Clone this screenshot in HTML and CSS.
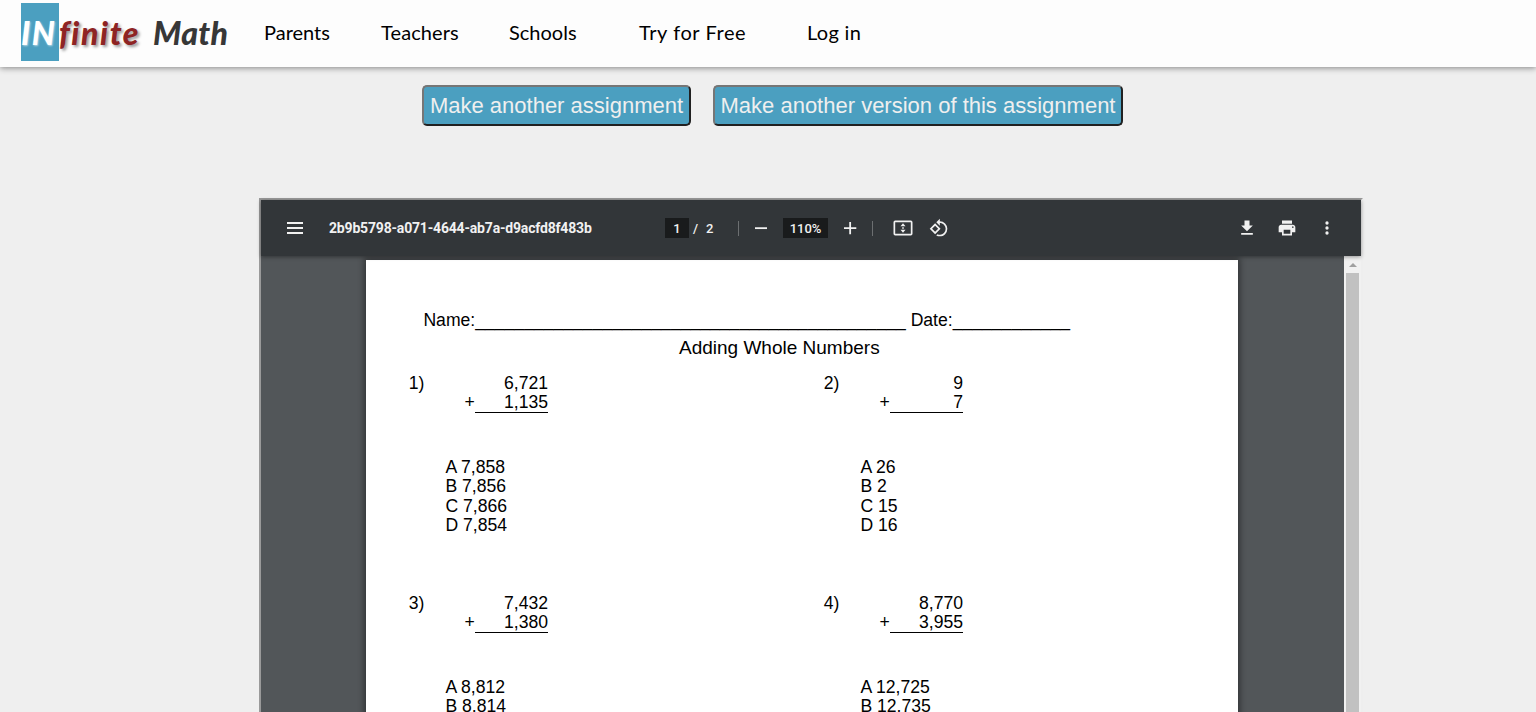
FILE: index.html
```html
<!DOCTYPE html>
<html lang="en">
<head>
<meta charset="utf-8">
<title>INfinite Math</title>
<link rel="stylesheet" href="styles.css">
</head>
<body>
<header class="site-header">
  <a class="logo"><span class="logo-in">IN</span><span class="logo-finite">finite</span><span class="logo-math">Math</span></a>
  <nav class="nav">
    <a class="nav-parents">Parents</a>
    <a class="nav-teachers">Teachers</a>
    <a class="nav-schools">Schools</a>
    <a class="nav-try">Try for Free</a>
    <a class="nav-login">Log in</a>
  </nav>
</header>
<main>
  <div class="actions">
    <button class="action">Make another assignment</button>
    <button class="action action-wide">Make another version of this assignment</button>
  </div>
  <section class="viewer">
    <div class="toolbar">
      <svg class="icon menu" viewBox="0 0 24 24"><path d="M4 6h16v2H4zM4 11h16v2H4zM4 16h16v2H4z"/></svg>
      <span class="filename">2b9b5798-a071-4644-ab7a-d9acfd8f483b</span>
      <span class="field page-field">1</span>
      <span class="slash">/</span>
      <span class="page-total">2</span>
      <i class="divider"></i>
      <svg class="icon small minus" viewBox="0 0 24 24"><path d="M4 11h16v2.4H4z"/></svg>
      <span class="field zoom-field">110%</span>
      <svg class="icon small plus" viewBox="0 0 24 24"><path d="M4 11h7V4h2.4v7h7v2.4h-7v7H11v-7H4z"/></svg>
      <i class="divider second"></i>
      <svg class="icon fit" viewBox="0 0 20 16"><path fill-rule="evenodd" d="M2.2.5h15.6a1.7 1.7 0 0 1 1.7 1.7v11.6a1.7 1.7 0 0 1-1.7 1.7H2.2a1.7 1.7 0 0 1-1.7-1.7V2.2A1.7 1.7 0 0 1 2.2.5zm0 1.7v11.6h15.6V2.2zM10 3.2l2.5 3h-5zM10 12.8l2.5-3h-5zM9.2 7.3h1.6v1.4H9.2z"/></svg>
      <svg class="icon rotate" viewBox="0 0 24 24"><path d="M7.34 6.41L.86 12.9l6.49 6.48 6.49-6.48-6.5-6.49zM3.69 12.9l3.66-3.66L11 12.9l-3.66 3.66-3.65-3.66zm15.67-6.26A8.95 8.95 0 0 0 13 4V.76L8.76 5 13 9.24V6c1.79 0 3.58.68 4.95 2.05a7.007 7.007 0 0 1 0 9.9 6.973 6.973 0 0 1-7.79 1.44l-1.49 1.49C10.02 21.62 11.51 22 13 22c2.3 0 4.61-.88 6.36-2.64a8.98 8.98 0 0 0 0-12.72z"/></svg>
      <svg class="icon download" viewBox="0 0 24 24"><path d="M19 9h-4V3H9v6H5l7 7 7-7zM5 18v2h14v-2H5z"/></svg>
      <svg class="icon print" viewBox="0 0 24 24"><path d="M19 8H5c-1.66 0-3 1.34-3 3v6h4v4h12v-4h4v-6c0-1.66-1.34-3-3-3zm-3 11H8v-5h8v5zm3-7c-.55 0-1-.45-1-1s.45-1 1-1 1 .45 1 1-.45 1-1 1zm-1-9H6v4h12V3z"/></svg>
      <svg class="icon more" viewBox="0 0 24 24"><circle cx="12" cy="6" r="2"/><circle cx="12" cy="12" r="2"/><circle cx="12" cy="18" r="2"/></svg>
    </div>
    <div class="canvas">
      <article class="sheet">
        <div class="name-line">Name:____________________________________________ Date:____________</div>
        <h1 class="title">Adding Whole Numbers</h1>
        <div class="problems">
          <div class="problem">
            <span class="number">1)</span>
            <div class="sum"><div>6,721</div><div class="addend"><span class="sign">+</span><span class="rule">1,135</span></div></div>
            <div class="answers"><div>A 7,858</div><div>B 7,856</div><div>C 7,866</div><div>D 7,854</div></div>
          </div>
          <div class="problem">
            <span class="number">2)</span>
            <div class="sum"><div>9</div><div class="addend"><span class="sign">+</span><span class="rule">7</span></div></div>
            <div class="answers"><div>A 26</div><div>B 2</div><div>C 15</div><div>D 16</div></div>
          </div>
          <div class="problem">
            <span class="number">3)</span>
            <div class="sum"><div>7,432</div><div class="addend"><span class="sign">+</span><span class="rule">1,380</span></div></div>
            <div class="answers"><div>A 8,812</div><div>B 8,814</div></div>
          </div>
          <div class="problem">
            <span class="number">4)</span>
            <div class="sum"><div>8,770</div><div class="addend"><span class="sign">+</span><span class="rule">3,955</span></div></div>
            <div class="answers"><div>A 12,725</div><div>B 12,735</div></div>
          </div>
        </div>
      </article>
      <div class="scrollbar"><i class="arrow"></i><i class="thumb"></i></div>
    </div>
  </section>
</main>
</body>
</html>
```

FILE: styles.css
```css
* { box-sizing: border-box; }
html, body { height: 100%; }
body {
  margin: 0;
  background: #efefef;
  font-family: "Liberation Sans", Arial, sans-serif;
  overflow: hidden;
  display: flex;
  flex-direction: column;
}
.site-header {
  flex: none;
  height: 67px;
  padding-left: 21px;
  display: flex;
  background: #fdfdfd;
  box-shadow: 0 1px 6px rgba(0, 0, 0, .45);
}
.logo {
  display: flex;
  width: 243px;
  height: 58px;
  margin-top: 3px;
  font: italic 900 32px/59px Lato, sans-serif;
  white-space: nowrap;
}
.logo-in { width: 38px; background: #4b9fc0; color: #fff; letter-spacing: 1.5px; text-shadow: 1px 1px 2px rgba(255, 255, 255, .6); }
.logo-finite { width: 94px; color: #8e2424; letter-spacing: 1.6px; text-shadow: 2px 2px 3px rgba(0, 0, 0, .4); }
.logo-math { color: #373737; letter-spacing: .3px; }
.nav { display: flex; font: 20px/64px Lato, sans-serif; color: #000; white-space: nowrap; }
.nav-parents { width: 117px; }
.nav-teachers { width: 128px; letter-spacing: .1px; }
.nav-schools { width: 130px; }
.nav-try { width: 168px; letter-spacing: .58px; }
.nav-login { letter-spacing: .3px; }
main { flex: 1; min-height: 0; display: flex; flex-direction: column; }
.actions { display: flex; gap: 22px; padding: 18px 0 0 422px; height: 131px; }
.action {
  width: 269px;
  height: 41px;
  padding: 0;
  border: 2px solid;
  border-color: #767676 #212121 #212121 #767676;
  border-radius: 5px;
  background: #4b9fc0;
  color: #efefef;
  font: 22px "Liberation Sans", Arial, sans-serif;
  white-space: nowrap;
}
.action-wide { width: 410px; }
.viewer {
  flex: 1;
  min-height: 0;
  width: 1104px;
  margin-left: 259px;
  border: solid;
  border-width: 2px 2px 0;
  border-color: #9a9a9a #eee #eee #9a9a9a;
  display: flex;
  flex-direction: column;
}
.toolbar {
  flex: none;
  position: relative;
  z-index: 1;
  height: 56px;
  display: flex;
  align-items: center;
  background: #323639;
  color: #f1f1f1;
  box-shadow: 0 1px 4px rgba(0, 0, 0, .4);
  font: 500 13px Roboto, sans-serif;
}
.icon { flex: none; width: 24px; height: 24px; fill: #f1f1f1; }
.menu { margin-left: 22px; }
.filename { width: 336px; margin-left: 22px; font-size: 14px; font-weight: 700; letter-spacing: -.18px; }
.field { height: 20px; line-height: 21px; background: #191b1c; text-align: center; }
.page-field { width: 24px; }
.slash { width: 17px; padding-left: 4px; }
.page-total { width: 32px; }
.divider { width: 1px; height: 15px; background: #6c6f71; }
.small { width: 18px; height: 18px; }
.minus { margin-left: 13px; }
.zoom-field { width: 45px; margin-left: 13px; }
.plus { margin-left: 13px; }
.second { margin-left: 13px; }
.fit { width: 20px; height: 16px; margin-left: 20px; }
.rotate { width: 20px; height: 20px; margin-left: 16px; }
.download { width: 20px; height: 20px; margin-left: 288px; }
.print { width: 20px; height: 20px; margin-left: 20px; }
.more { width: 20px; height: 20px; margin-left: 20px; }
.canvas { flex: 1; min-height: 0; display: flex; background: #525659; overflow: hidden; }
.sheet {
  flex: none;
  width: 872px;
  height: 900px;
  margin: 4px 106px 0 105px;
  background: #fff;
  box-shadow: 0 0 6px 2px rgba(0, 0, 0, .4);
  font-size: 17.6px;
  line-height: 19.33px;
  color: #000;
}
.name-line { padding: 50.6px 0 0 57.4px; white-space: pre; }
.title { margin: 8px 0 0; padding-left: 313px; font-size: 19px; line-height: 20px; font-weight: 400; }
.problems { display: grid; grid-template-columns: 415px 415px; grid-auto-rows: 220px; padding: 16px 0 0 42px; }
.problem { display: grid; grid-template-columns: 56px 84px; grid-template-rows: 84px auto; }
.number { padding-left: .7px; }
.sum { text-align: right; }
.addend { display: flex; justify-content: flex-end; }
.sign { width: 10.5px; text-align: left; }
.rule { width: 73px; height: 19.4px; border-bottom: 1px solid #000; }
.answers { grid-column: 1 / 3; padding-left: 37.4px; }
.scrollbar { width: 17px; background: #f1f1f1; display: flex; flex-direction: column; align-items: center; }
.arrow { border: 4px solid transparent; border-top: 0; border-bottom-color: #a0a0a0; margin: 7px 0 6px; }
.thumb { width: 13px; flex: 1; background: #c1c1c1; }
```
